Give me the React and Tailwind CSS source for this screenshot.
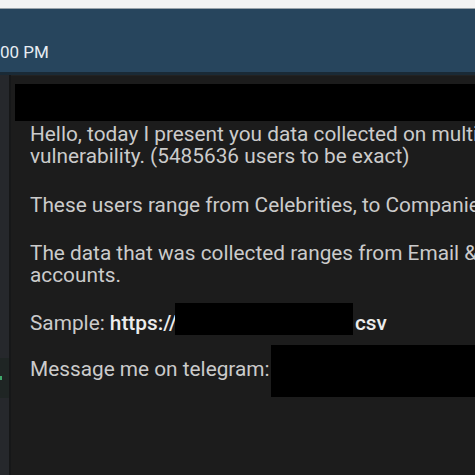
export default function App() {
  return (
    <div className="w-[475px] h-[475px] overflow-hidden bg-[#1c1c1c] font-['Roboto',sans-serif] flex flex-col">
      <div className="h-[9px] bg-[#f3f3f3] border-b border-[#9aa3aa] shrink-0" />
      <div className="h-[63px] bg-[#27455d] shrink-0 flex items-end pb-[10px]">
        <span className="text-[17px] leading-[20px] text-[#e6ecf2]">00 PM</span>
      </div>
      <div className="h-[3px] bg-[#1a2a36] shrink-0" />
      <div className="flex flex-1">
        <div className="w-[11px] bg-[#26282c] border-r-2 border-[#161718] flex flex-col shrink-0">
          <div className="h-[283px]" />
          <div className="h-[40px] bg-[#1f2524] flex items-center">
            <div className="w-[2px] h-[4px] bg-[#3fa86b]" />
          </div>
        </div>
        <div className="flex-1 pt-[8px] pl-[4px] bg-[#1c1c1c] border-t border-[#222] min-w-0 overflow-hidden">
          <div className="h-[37px] bg-black" />
          <div className="pl-[15px] mt-[2px] text-[20.8px] leading-[22px] text-[#cbcbcb] whitespace-nowrap">
            <p className="mb-[27px]">
              Hello, today I present you data collected on multiple
              <br />
              vulnerability. (5485636 users to be exact)
            </p>
            <p className="mb-[26px]">These users range from Celebrities, to Companies</p>
            <p className="mb-[26px]">
              The data that was collected ranges from Email &amp;
              <br />
              accounts.
            </p>
            <div className="h-[22px] flex items-center mb-[24px]">
              <span>Sample:&nbsp;</span>
              <span className="text-[#ececec] font-medium">https://</span>
              <span className="inline-block w-[178px] h-[32px] bg-black shrink-0 mt-[-8px] ml-[-2px] mr-[2px]" />
              <span className="text-[#ececec] font-medium">csv</span>
            </div>
            <div className="h-[22px] flex items-center">
              <span>Message me on telegram:</span>
              <span className="inline-block w-[240px] h-[52px] bg-black shrink-0 ml-[1px] mt-[4px]" />
            </div>
          </div>
        </div>
      </div>
    </div>
  );
}
